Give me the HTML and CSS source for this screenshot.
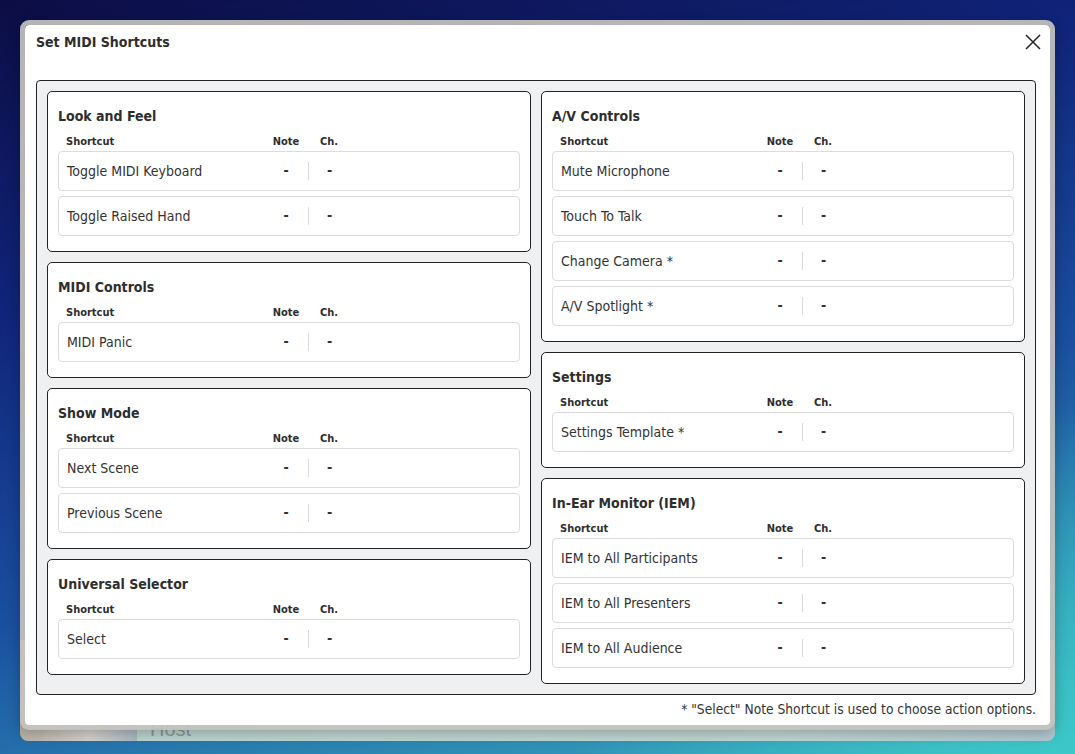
FILE: index.html
```html
<!DOCTYPE html>
<html lang="en">
<head>
<meta charset="utf-8">
<title>Set MIDI Shortcuts</title>
<link rel="stylesheet" href="styles.css">
</head>
<body>
<div class="app-behind">
  <div class="app-photo"></div>
  <div class="app-strip"><span class="app-host">Host</span></div>
</div>

<div class="modal" role="dialog" aria-label="Set MIDI Shortcuts">
  <div class="modal-header">
    <h1 class="modal-title">Set MIDI Shortcuts</h1>
    <button class="close-btn" aria-label="Close">
      <svg width="16" height="16" viewBox="0 0 16 16"><path d="M1 1 L15 15 M15 1 L1 15" stroke="#222" stroke-width="1.5" fill="none"/></svg>
    </button>
  </div>

  <div class="panel">
    <div class="col">
      <section class="card">
        <h2 class="card-title">Look and Feel</h2>
        <div class="grid-head"><span class="h-label">Shortcut</span><span class="h-cell">Note</span><span class="h-cell">Ch.</span><span></span></div>
        <div class="rows">
          <div class="row"><span class="label">Toggle MIDI Keyboard</span><span class="cell">-</span><span class="cell sep">-</span><span></span></div>
          <div class="row"><span class="label">Toggle Raised Hand</span><span class="cell">-</span><span class="cell sep">-</span><span></span></div>
        </div>
      </section>
      <section class="card">
        <h2 class="card-title">MIDI Controls</h2>
        <div class="grid-head"><span class="h-label">Shortcut</span><span class="h-cell">Note</span><span class="h-cell">Ch.</span><span></span></div>
        <div class="rows">
          <div class="row"><span class="label">MIDI Panic</span><span class="cell">-</span><span class="cell sep">-</span><span></span></div>
        </div>
      </section>
      <section class="card">
        <h2 class="card-title">Show Mode</h2>
        <div class="grid-head"><span class="h-label">Shortcut</span><span class="h-cell">Note</span><span class="h-cell">Ch.</span><span></span></div>
        <div class="rows">
          <div class="row"><span class="label">Next Scene</span><span class="cell">-</span><span class="cell sep">-</span><span></span></div>
          <div class="row"><span class="label">Previous Scene</span><span class="cell">-</span><span class="cell sep">-</span><span></span></div>
        </div>
      </section>
      <section class="card">
        <h2 class="card-title">Universal Selector</h2>
        <div class="grid-head"><span class="h-label">Shortcut</span><span class="h-cell">Note</span><span class="h-cell">Ch.</span><span></span></div>
        <div class="rows">
          <div class="row"><span class="label">Select</span><span class="cell">-</span><span class="cell sep">-</span><span></span></div>
        </div>
      </section>
    </div>

    <div class="col">
      <section class="card">
        <h2 class="card-title">A/V Controls</h2>
        <div class="grid-head"><span class="h-label">Shortcut</span><span class="h-cell">Note</span><span class="h-cell">Ch.</span><span></span></div>
        <div class="rows">
          <div class="row"><span class="label">Mute Microphone</span><span class="cell">-</span><span class="cell sep">-</span><span></span></div>
          <div class="row"><span class="label">Touch To Talk</span><span class="cell">-</span><span class="cell sep">-</span><span></span></div>
          <div class="row"><span class="label">Change Camera *</span><span class="cell">-</span><span class="cell sep">-</span><span></span></div>
          <div class="row"><span class="label">A/V Spotlight *</span><span class="cell">-</span><span class="cell sep">-</span><span></span></div>
        </div>
      </section>
      <section class="card">
        <h2 class="card-title">Settings</h2>
        <div class="grid-head"><span class="h-label">Shortcut</span><span class="h-cell">Note</span><span class="h-cell">Ch.</span><span></span></div>
        <div class="rows">
          <div class="row"><span class="label">Settings Template *</span><span class="cell">-</span><span class="cell sep">-</span><span></span></div>
        </div>
      </section>
      <section class="card">
        <h2 class="card-title">In-Ear Monitor (IEM)</h2>
        <div class="grid-head"><span class="h-label">Shortcut</span><span class="h-cell">Note</span><span class="h-cell">Ch.</span><span></span></div>
        <div class="rows">
          <div class="row"><span class="label">IEM to All Participants</span><span class="cell">-</span><span class="cell sep">-</span><span></span></div>
          <div class="row"><span class="label">IEM to All Presenters</span><span class="cell">-</span><span class="cell sep">-</span><span></span></div>
          <div class="row"><span class="label">IEM to All Audience</span><span class="cell">-</span><span class="cell sep">-</span><span></span></div>
        </div>
      </section>
    </div>
  </div>

  <p class="footnote">* "Select" Note Shortcut is used to choose action options.</p>
</div>
</body>
</html>
```

FILE: styles.css
```css
html, body {
  margin: 0;
  padding: 0;
  width: 1075px;
  height: 754px;
  overflow: hidden;
}

body {
  position: relative;
  font-family: "DejaVu Sans Condensed", "DejaVu Sans", Verdana, sans-serif;
  font-stretch: semi-condensed;
  color: #333;
  background:
    radial-gradient(ellipse 700px 500px at 1075px 754px, rgba(60, 200, 200, 0.95), rgba(60, 200, 200, 0) 70%),
    linear-gradient(165deg, #0c0d44 0%, #10247a 30%, #1a4fa0 60%, #2f8fb6 85%, #3db3c0 100%);
}

/* app visible behind the dialog */
.app-behind {
  position: absolute;
  left: 20px;
  top: 640px;
  width: 1035px;
  height: 101px;
  display: flex;
  border-radius: 0 0 8px 8px;
  overflow: hidden;
}
.app-photo {
  width: 117px;
  background: linear-gradient(90deg, #b9b2a8, #d8d4cf 60%, #a9b9c4);
}
.app-strip {
  flex: 1;
  background: linear-gradient(90deg, #bdd7d3, #c2d9d6 70%, #b3c9d2);
  position: relative;
}
.app-host {
  position: absolute;
  left: 13px;
  top: 78px;
  font-family: "Liberation Sans", sans-serif;
  font-size: 20px;
  line-height: 22px;
  color: #8a9a9a;
}

/* dialog */
.modal {
  position: absolute;
  left: 20px;
  top: 20px;
  width: 1035px;
  height: 710px;
  box-sizing: border-box;
  border: 5px solid rgba(196, 194, 190, 0.92);
  border-radius: 9px;
  background: #fff;
  background-clip: padding-box;
  padding: 8px 11px 0 11px;
  box-shadow: 0 4px 14px rgba(0, 0, 0, 0.25);
}

.modal-header {
  display: flex;
  align-items: center;
  justify-content: space-between;
  height: 18px;
  margin-bottom: 29px;
}
.modal-title {
  margin: 0;
  font-size: 14px;
  font-weight: bold;
  line-height: 18px;
  color: #2e2e2e;
}
.close-btn {
  border: 0;
  background: transparent;
  padding: 0;
  margin-right: -2px;
  width: 16px;
  height: 16px;
  display: flex;
  cursor: pointer;
}

.panel {
  box-sizing: border-box;
  width: 1000px;
  border: 1px solid #222;
  border-radius: 4px;
  background: #eff0f2;
  padding: 10px;
  display: grid;
  grid-template-columns: 1fr 1fr;
  column-gap: 10px;
  align-items: start;
}

.col {
  display: flex;
  flex-direction: column;
  gap: 10px;
}

.card {
  background: #fff;
  border: 1px solid #222;
  border-radius: 5px;
  padding: 15px 10px 15px 10px;
}

.card-title {
  margin: 0 0 10px 0;
  font-size: 14px;
  line-height: 18px;
  font-weight: bold;
  color: #2e2e2e;
}

.grid-head,
.row {
  display: grid;
  grid-template-columns: 1fr 44px 42px 169px;
  align-items: center;
}

.grid-head {
  height: 14px;
  margin-bottom: 2px;
  padding: 0 1px;
  font-size: 11px;
  line-height: 14px;
  font-weight: bold;
  color: #2e2e2e;
}
.h-label { padding-left: 7px; }
.h-cell { text-align: center; }

.rows {
  display: flex;
  flex-direction: column;
  gap: 5px;
}

.row {
  height: 40px;
  box-sizing: border-box;
  border: 1px solid #dcdcdc;
  border-radius: 4px;
  font-size: 14px;
  line-height: 18px;
  color: #333;
}
.label { padding-left: 8px; white-space: nowrap; }
.cell {
  text-align: center;
  height: 18px;
  line-height: 17px;
  font-weight: bold;
}
.cell.sep { border-left: 1px solid #dcdcdc; }

.footnote {
  margin: 0;
  padding-top: 5px;
  width: 1000px;
  text-align: right;
  font-size: 13.7px;
  line-height: 18px;
  color: #333;
}
```
